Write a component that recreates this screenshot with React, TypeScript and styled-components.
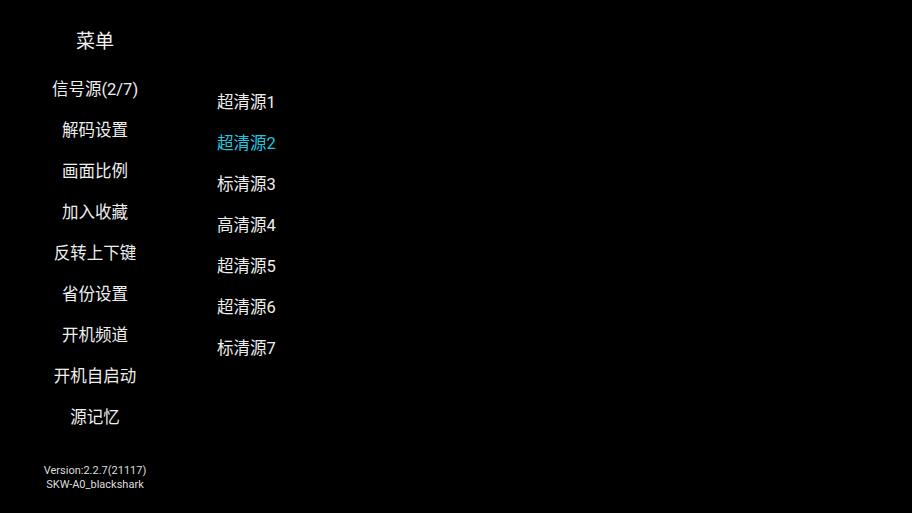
import React from "react";
import styled, { createGlobalStyle } from "styled-components";

const Global = createGlobalStyle`
  html, body { margin: 0; padding: 0; background: #000; }
  body { font-family: Roboto, "Noto Sans CJK SC", sans-serif; }
`;

const Screen = styled.div`
  width: 912px;
  height: 513px;
  background: #000;
  display: flex;
  overflow: hidden;
`;

const Sidebar = styled.div`
  width: 190px;
  display: flex;
  flex-direction: column;
  align-items: center;
  padding-top: 29px;
  box-sizing: border-box;
`;

const Title = styled.div`
  font-size: 19px;
  line-height: 26px;
  color: #f2f2f2;
  margin-bottom: 14px;
`;

const MenuList = styled.div`
  display: flex;
  flex-direction: column;
  align-items: center;
`;

const MenuItem = styled.div`
  font-size: 16.5px;
  line-height: 41px;
  color: #eeeeee;
  white-space: nowrap;
`;

const Version = styled.div`
  margin-top: 26px;
  font-size: 11px;
  line-height: 14px;
  color: #dddddd;
  text-align: center;
`;

const SubList = styled.div`
  margin-left: 27px;
  padding-top: 82px;
  display: flex;
  flex-direction: column;
`;

const SubItem = styled.div<{ $active?: boolean }>`
  font-size: 16.5px;
  line-height: 41px;
  color: ${(p) => (p.$active ? "#1ec8e0" : "#eeeeee")};
  white-space: nowrap;
`;

const menu = [
  "信号源(2/7)",
  "解码设置",
  "画面比例",
  "加入收藏",
  "反转上下键",
  "省份设置",
  "开机频道",
  "开机自启动",
  "源记忆",
];

const sources = ["超清源1", "超清源2", "标清源3", "高清源4", "超清源5", "超清源6", "标清源7"];

export default function App() {
  return (
    <>
      <Global />
      <Screen>
        <Sidebar>
          <Title>菜单</Title>
          <MenuList>
            {menu.map((m) => (
              <MenuItem key={m}>{m}</MenuItem>
            ))}
          </MenuList>
          <Version>
            Version:2.2.7(21117)
            <br />
            SKW-A0_blackshark
          </Version>
        </Sidebar>
        <SubList>
          {sources.map((s, i) => (
            <SubItem key={s} $active={i === 1}>
              {s}
            </SubItem>
          ))}
        </SubList>
      </Screen>
    </>
  );
}
